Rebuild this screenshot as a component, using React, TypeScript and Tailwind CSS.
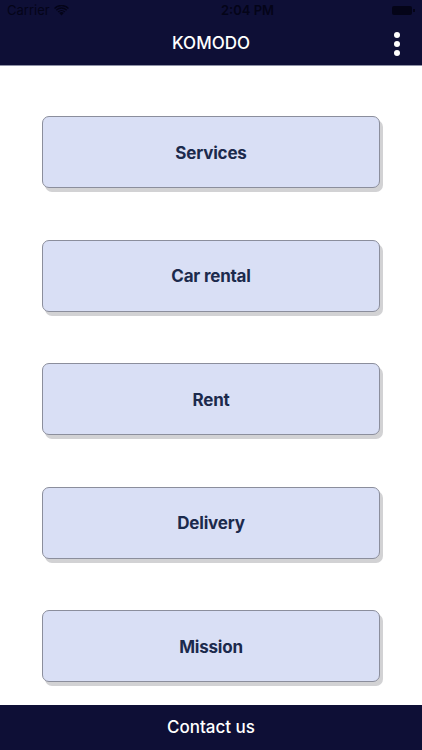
const items = ["Services", "Car rental", "Rent", "Delivery", "Mission"];

const App = () => {
  return (
    <div
      className="flex h-[750px] w-[422px] flex-col bg-white"
      style={{ fontFamily: "Inter, 'Noto Sans', sans-serif" }}
    >
      {/* status bar + nav */}
      <div className="bg-[#0e0f36] border-b border-[#8f92a6]">
        <div className="flex h-[21px] items-center justify-between px-[7px] text-[13px] text-[#040418]">
          <div className="flex items-center gap-1">
            <span>Carrier</span>
            <svg width="15" height="11" viewBox="0 0 15 11" fill="#040418">
              <path d="M7.5 10.5 5.2 8.1a3.3 3.3 0 0 1 4.6 0z" />
              <path d="M3.6 6.5a5.6 5.6 0 0 1 7.8 0l-1 1a4.2 4.2 0 0 0-5.8 0z" />
              <path d="M1.8 4.7a8.1 8.1 0 0 1 11.4 0l-1 1a6.7 6.7 0 0 0-9.4 0z" />
              <path d="M0 2.9a10.6 10.6 0 0 1 15 0l-1 1a9.2 9.2 0 0 0-13 0z" />
            </svg>
          </div>
          <span className="font-semibold ml-[34px]">2:04 PM</span>
          <div className="flex items-center">
            <div className="h-[9px] w-[20px] rounded-[2px] bg-[#040418]" />
            <div className="ml-[1px] h-[3px] w-[1.5px] bg-[#040418]" />
          </div>
        </div>
        <div className="relative flex h-[44px] items-center justify-center pt-[1px]">
          <span className="text-[17px] font-medium text-white">KOMODO</span>
          <div className="absolute right-[22px] top-[11px] flex flex-col gap-[3px]">
            <div className="h-[6px] w-[6px] rounded-full bg-white" />
            <div className="h-[6px] w-[6px] rounded-full bg-white" />
            <div className="h-[6px] w-[6px] rounded-full bg-white" />
          </div>
        </div>
      </div>

      {/* menu buttons */}
      <div className="flex flex-1 flex-col gap-[51.5px] px-[42px] pt-[50px]">
        {items.map((item) => (
          <button
            key={item}
            className="flex h-[72px] w-[338px] items-center justify-center rounded-[7px] border border-[#8b8e9c] bg-[#d9dff5] pt-[3px] text-[17px] font-bold tracking-[-0.2px] text-[#1c2a4c] shadow-[3px_4px_0_0_#d2d2d4]"
          >
            {item}
          </button>
        ))}
      </div>

      {/* footer */}
      <div className="flex h-[45px] items-center justify-center bg-[#0e0f36]">
        <span className="text-[17px] font-medium text-white">Contact us</span>
      </div>
    </div>
  );
};

export default App;
